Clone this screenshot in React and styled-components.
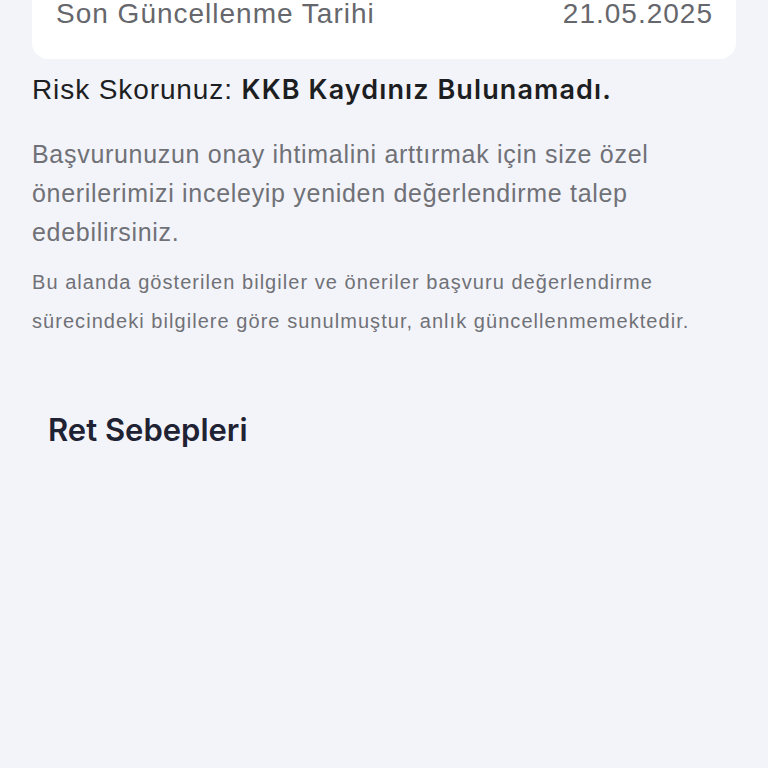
import React from "react";
import styled, { createGlobalStyle } from "styled-components";

const GlobalStyle = createGlobalStyle`
  body {
    margin: 0;
    background: #f3f4f9;
    font-family: "Liberation Sans", Arial, sans-serif;
  }
`;

const App = () => {
  return (
    <>
      <GlobalStyle />
      <Page>
        <InfoCard>
          <InfoRow>
            <span>Son Güncellenme Tarihi</span>
            <span>21.05.2025</span>
          </InfoRow>
        </InfoCard>
        <RiskLine>
          Risk Skorunuz: <strong>KKB Kaydınız Bulunamadı.</strong>
        </RiskLine>
        <Lead>
          Başvurunuzun onay ihtimalini arttırmak için size özel önerilerimizi inceleyip yeniden değerlendirme talep
          edebilirsiniz.
        </Lead>
        <Note>
          Bu alanda gösterilen bilgiler ve öneriler başvuru değerlendirme sürecindeki bilgilere göre sunulmuştur, anlık
          güncellenmemektedir.
        </Note>
        <SectionTitle>Ret Sebepleri</SectionTitle>
      </Page>
    </>
  );
};

export default App;

const Page = styled.div`
  min-height: 768px;
  padding: 0 32px;
  box-sizing: border-box;
  overflow: hidden;
`;

// card is scrolled past its top edge, only the bottom corners show
const InfoCard = styled.div`
  background: #ffffff;
  border-radius: 0 0 16px 16px;
  padding: 0 23px 31px 24px;
`;

const InfoRow = styled.div`
  display: flex;
  justify-content: space-between;
  align-items: center;
  font-size: 28px;
  line-height: 28px;
  letter-spacing: 1px;
  color: #66676c;
`;

const RiskLine = styled.p`
  margin: 15px 0 0;
  font-size: 28px;
  line-height: 32px;
  letter-spacing: 0.9px;
  color: #1d1e22;

  strong {
    font-family: Inter, "Noto Sans", sans-serif;
    font-weight: 600;
    font-size: 27px;
    letter-spacing: 1.1px;
  }
`;

const Lead = styled.p`
  margin: 29px 0 0;
  font-size: 25px;
  line-height: 39px;
  letter-spacing: 0.7px;
  color: #707177;
`;

const Note = styled.p`
  margin: 11px 0 0;
  font-size: 20px;
  line-height: 39px;
  letter-spacing: 1.05px;
  color: #707177;
`;

const SectionTitle = styled.h2`
  margin: 71px 0 0 16px;
  font-family: Inter, "Noto Sans", sans-serif;
  font-size: 31px;
  line-height: 36px;
  font-weight: 600;
  color: #1f2233;
`;
